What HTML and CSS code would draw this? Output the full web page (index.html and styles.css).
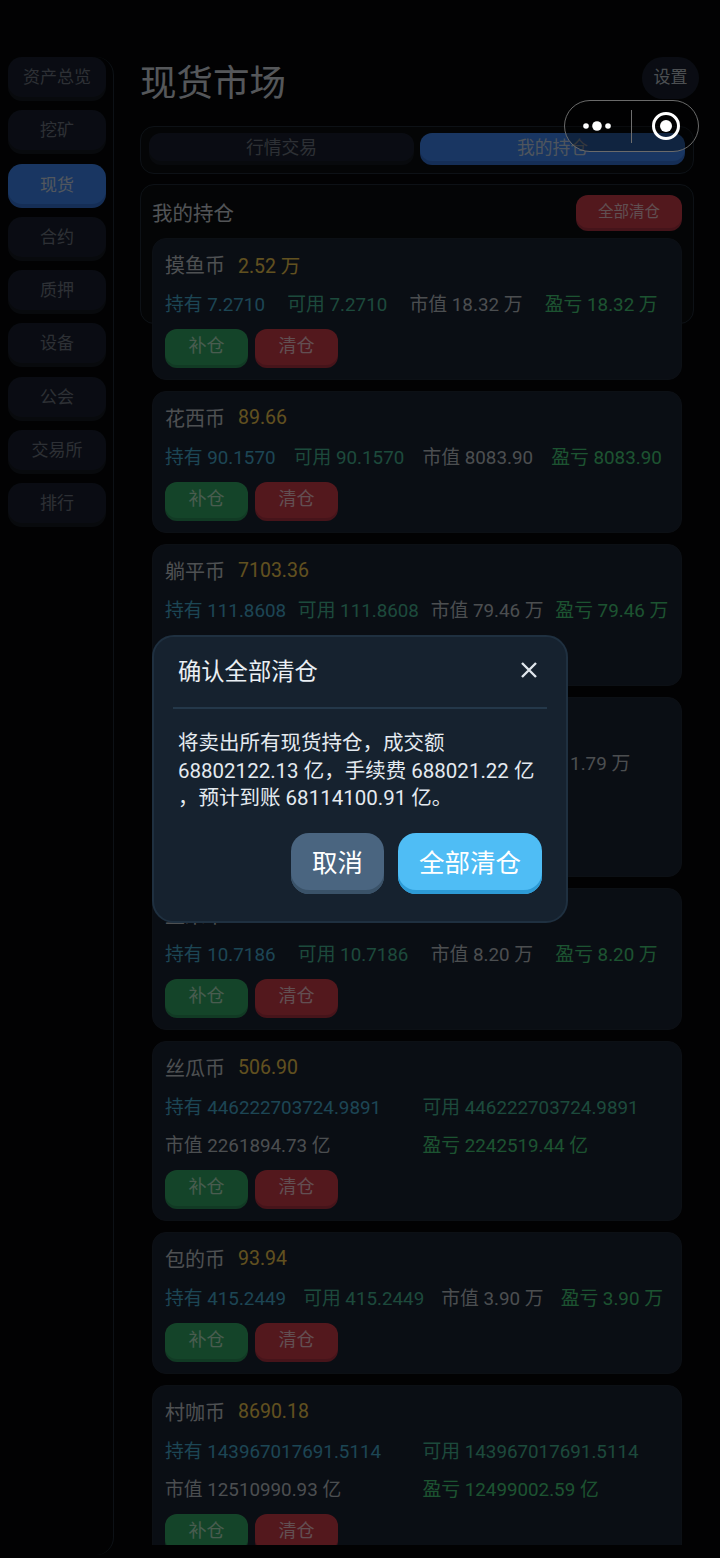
FILE: index.html
```html
<!DOCTYPE html>
<html lang="zh-CN">
<head>
<meta charset="utf-8">
<title>现货市场</title>
<link rel="stylesheet" href="styles.css">
</head>
<body>
<div class="app">
  <nav class="sidebar">
    <a class="nav-item">资产总览</a>
    <a class="nav-item">挖矿</a>
    <a class="nav-item active">现货</a>
    <a class="nav-item">合约</a>
    <a class="nav-item">质押</a>
    <a class="nav-item">设备</a>
    <a class="nav-item">公会</a>
    <a class="nav-item">交易所</a>
    <a class="nav-item">排行</a>
  </nav>
  <main class="main">
    <header class="header">
      <h1 class="title">现货市场</h1>
      <button class="settings">设置</button>
    </header>
    <div class="tabs">
      <div class="tab">行情交易</div>
      <div class="tab active">我的持仓</div>
    </div>
    <section class="panel">
      <div class="panel-head">
        <h2 class="panel-title">我的持仓</h2>
        <button class="clear-all">全部清仓</button>
      </div>
      <div class="list">
        <article class="card">
          <div class="card-head"><span class="name">摸鱼币</span><span class="price">2.52 万</span></div>
          <div class="stats">
            <span class="hold">持有 7.2710</span><span class="avail">可用 7.2710</span><span class="value">市值 18.32 万</span><span class="pnl">盈亏 18.32 万</span>
          </div>
          <div class="actions"><button class="btn buy">补仓</button><button class="btn sell">清仓</button></div>
        </article>
        <article class="card">
          <div class="card-head"><span class="name">花西币</span><span class="price">89.66</span></div>
          <div class="stats">
            <span class="hold">持有 90.1570</span><span class="avail">可用 90.1570</span><span class="value">市值 8083.90</span><span class="pnl">盈亏 8083.90</span>
          </div>
          <div class="actions"><button class="btn buy">补仓</button><button class="btn sell">清仓</button></div>
        </article>
        <article class="card">
          <div class="card-head"><span class="name">躺平币</span><span class="price">7103.36</span></div>
          <div class="stats">
            <span class="hold">持有 111.8608</span><span class="avail">可用 111.8608</span><span class="value">市值 79.46 万</span><span class="pnl">盈亏 79.46 万</span>
          </div>
          <div class="actions"><button class="btn buy">补仓</button><button class="btn sell">清仓</button></div>
        </article>
        <article class="card">
          <div class="card-head"><span class="name">金豆币</span><span class="price">12.50</span></div>
          <div class="stats three">
            <span class="hold">持有 1432.5678</span><span class="avail">可用 1432.5678</span><span class="value">市值 1.79 万</span><span class="pnl">盈亏 1.79 万</span>
          </div>
          <div class="actions"><button class="btn buy">补仓</button><button class="btn sell">清仓</button></div>
        </article>
        <article class="card">
          <div class="card-head"><span class="name">玉米币</span></div>
          <div class="stats">
            <span class="hold">持有 10.7186</span><span class="avail">可用 10.7186</span><span class="value">市值 8.20 万</span><span class="pnl">盈亏 8.20 万</span>
          </div>
          <div class="actions"><button class="btn buy">补仓</button><button class="btn sell">清仓</button></div>
        </article>
        <article class="card">
          <div class="card-head"><span class="name">丝瓜币</span><span class="price">506.90</span></div>
          <div class="stats two">
            <span class="hold">持有 446222703724.9891</span><span class="avail">可用 446222703724.9891</span><span class="value">市值 2261894.73 亿</span><span class="pnl">盈亏 2242519.44 亿</span>
          </div>
          <div class="actions"><button class="btn buy">补仓</button><button class="btn sell">清仓</button></div>
        </article>
        <article class="card">
          <div class="card-head"><span class="name">包的币</span><span class="price">93.94</span></div>
          <div class="stats">
            <span class="hold">持有 415.2449</span><span class="avail">可用 415.2449</span><span class="value">市值 3.90 万</span><span class="pnl">盈亏 3.90 万</span>
          </div>
          <div class="actions"><button class="btn buy">补仓</button><button class="btn sell">清仓</button></div>
        </article>
        <article class="card">
          <div class="card-head"><span class="name">村咖币</span><span class="price">8690.18</span></div>
          <div class="stats two">
            <span class="hold">持有 143967017691.5114</span><span class="avail">可用 143967017691.5114</span><span class="value">市值 12510990.93 亿</span><span class="pnl">盈亏 12499002.59 亿</span>
          </div>
          <div class="actions"><button class="btn buy">补仓</button><button class="btn sell">清仓</button></div>
        </article>
      </div>
    </section>
  </main>
</div>

<div class="overlay">
  <div class="dialog">
    <div class="dialog-head">
      <h3 class="dialog-title">确认全部清仓</h3>
      <svg class="close" viewBox="0 0 18 18" aria-label="关闭"><path d="M2 2 16 16M16 2 2 16"/></svg>
    </div>
    <p class="dialog-body">将卖出所有现货持仓，成交额<br>68802122.13 亿，手续费 688021.22 亿<br>，预计到账 68114100.91 亿。</p>
    <div class="dialog-actions">
      <button class="dialog-btn cancel">取消</button>
      <button class="dialog-btn confirm">全部清仓</button>
    </div>
  </div>
</div>

<div class="capsule">
  <svg class="capsule-dots" viewBox="0 0 30 12"><circle cx="4" cy="6" r="2.8"/><circle cx="15" cy="6" r="4.8"/><circle cx="26" cy="6" r="2.8"/></svg>
  <span class="capsule-line"></span>
  <svg class="capsule-target" viewBox="0 0 30 30"><circle class="ring" cx="15" cy="15" r="12.5"/><circle class="dot" cx="15" cy="15" r="6"/></svg>
</div>
</body>
</html>
```
FILE: styles.css
```css
* { box-sizing: border-box; }
html, body { margin: 0; padding: 0; height: 1558px; overflow: hidden; background: #050709; }
body, button { font-family: Roboto, "Noto Sans CJK SC", sans-serif; }
button { border: 0; padding: 0; margin: 0; }
h1, h2, h3, p { margin: 0; font-weight: 400; }

.app { display: flex; height: 1558px; padding-top: 57px; }

.sidebar {
  flex: none; width: 114px; height: 1498px; padding-left: 8px;
  display: flex; flex-direction: column; gap: 13.25px;
  border-right: 1px solid #222c38; border-radius: 0 18px 18px 0;
}
.nav-item {
  width: 98px; height: 40px; padding-bottom: 3px; display: flex; align-items: center; justify-content: center;
  background: #1a2030; border-radius: 14px; box-shadow: 0 4px 0 #161a22;
  font-size: 17px; color: #727984;
}
.nav-item.active { background: #3f88f4; box-shadow: 0 4px 0 #3674d6; color: #cddaec; padding-bottom: 1px; }

.main { flex: 1; margin-left: 26px; padding-right: 26px; height: 1488px; overflow: hidden; }

.header { display: flex; justify-content: space-between; align-items: flex-start; margin-right: -5px; height: 69px; }
.title { font-size: 36.5px; line-height: 54px; color: #d4dae0; }
.settings { width: 57px; height: 42px; border-radius: 21px; background: #1a2030; color: #bfc6ce; font-size: 17px; padding-bottom: 5px; }

.tabs {
  display: grid; grid-template-columns: 1fr 1fr; gap: 6px; height: 48px; padding: 6px 8px;
  border: 1px solid #222c38; border-radius: 14px; background: #0a0d11;
}
.tab { height: 28px; padding-bottom: 3px; display: flex; align-items: center; justify-content: center; border-radius: 12px; background: #1a2030; box-shadow: 0 4px 0 #161a22; color: #727984; font-size: 17.75px; }
.tab.active { background: #3f88f4; box-shadow: 0 4px 0 #3674d6; color: #c6d4e8; }

.panel { margin-top: 10px; height: 140px; padding: 10px 11px; border: 1px solid #222c38; border-radius: 14px; background: #0a0d11; }
.panel-head { display: flex; justify-content: space-between; align-items: flex-start; height: 43px; }
.panel-title { font-size: 20.5px; line-height: 38px; color: #ccd2d8; }
.clear-all { width: 106px; height: 33px; padding-bottom: 3px; border-radius: 12px; background: #cc3c4a; box-shadow: 0 3px 0 #ac3442; color: #f0c6cc; font-size: 15.5px; }

.list { display: flex; flex-direction: column; gap: 11px; }
.card { flex: none; padding: 10px 12px 14px; border: 1px solid #1f2836; border-radius: 14px; background: #1b2332; }
.card-head { display: flex; align-items: center; gap: 13px; height: 30px; }
.name { font-size: 20px; color: #c2c8ce; }
.price { font-size: 19.5px; color: #f2ca50; }

.stats {
  display: grid; grid-auto-flow: column; grid-auto-columns: auto; column-gap: 11px; row-gap: 12px;
  margin-top: 13px; font-size: 18.8px; line-height: 26px; white-space: nowrap;
}
.stats.two, .stats.three { grid-auto-flow: row; }
.stats.two { grid-template-columns: auto auto; }
.stats.three { grid-template-columns: auto auto auto; }
.hold { color: #48aed2; }
.avail { color: #48b896; }
.value { color: #bcc2c8; }
.pnl { color: #48d07c; }

.actions { display: flex; gap: 7px; margin-top: 11px; }
.btn { width: 83px; height: 36px; padding-bottom: 6px; border-radius: 12px; font-size: 18px; }
.buy { background: #34aa68; box-shadow: 0 3px 0 #2c925a; color: #b6e6c6; }
.sell { background: #d03c4a; box-shadow: 0 3px 0 #b03442; color: #f6c6ce; }

.overlay { position: fixed; inset: 0; display: flex; align-items: center; justify-content: center; background: rgba(0, 0, 0, 0.6); }
.dialog { width: 416px; height: 288px; padding: 0 19px; background: #16222f; border: 2px solid #1f3040; border-radius: 22px; }
.dialog-head { display: flex; justify-content: space-between; align-items: center; height: 72px; padding: 0 9px 4px 5px; border-bottom: 2px solid #24384a; }
.dialog-title { font-size: 23.3px; color: #eaeff4; }
.close { width: 18px; height: 18px; fill: none; stroke: #dfe6ec; stroke-width: 2.4; }
.dialog-body { margin-top: 21px; padding-left: 5px; font-size: 20.5px; line-height: 27.7px; color: #e4eaf0; white-space: nowrap; }
.dialog-actions { display: flex; justify-content: flex-end; gap: 14px; margin-top: 20px; padding-right: 5px; }
.dialog-btn { height: 61px; padding-bottom: 7px; border-radius: 18px; font-size: 25.5px; color: #fff; }
.cancel { width: 93px; background: #4a6580; box-shadow: inset 0 -4px 0 #3a5268; }
.confirm { width: 144px; background: #4fbdf5; box-shadow: inset 0 -4px 0 #2d9bd6; }

.capsule {
  position: fixed; left: 564px; top: 100px; width: 135px; height: 52px;
  display: flex; align-items: center; border: 1.5px solid #6a6a6a; border-radius: 26px;
  background: rgba(0, 0, 0, 0.35);
}
.capsule-dots { width: 30px; height: 12px; margin-left: 17px; fill: #fff; }
.capsule-line { width: 1px; height: 33px; margin-left: 19px; background: #6e6e6e; }
.capsule-target { width: 30px; height: 30px; margin-left: 19px; }
.ring { fill: none; stroke: #fff; stroke-width: 3; }
.dot { fill: #fff; }
```
